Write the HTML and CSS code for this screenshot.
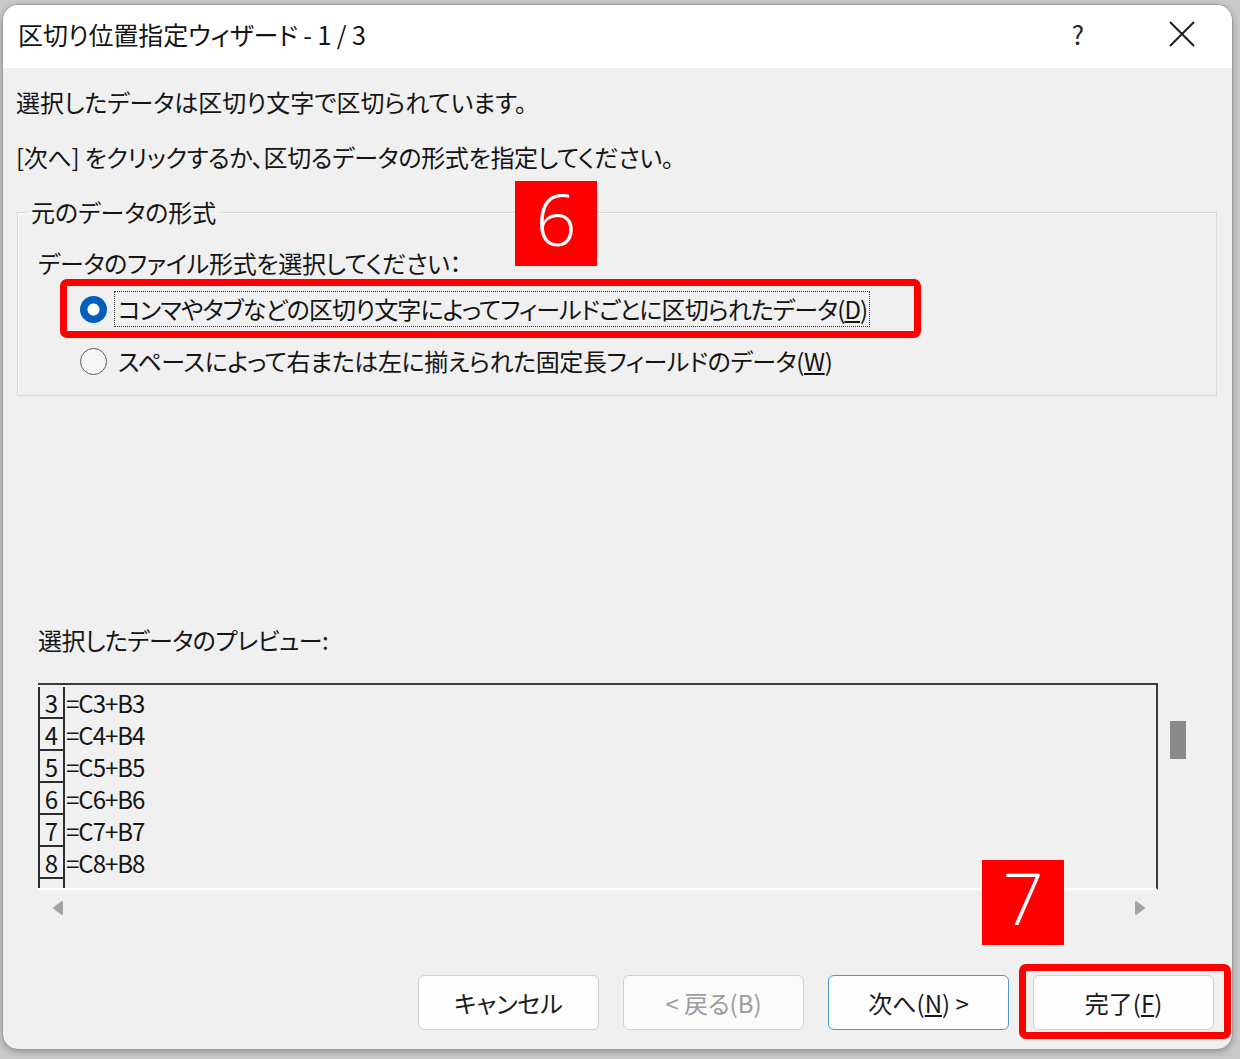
FILE: index.html
```html
<!DOCTYPE html>
<html lang="ja">
<head>
<meta charset="utf-8">
<title>区切り位置指定ウィザード</title>
<link rel="stylesheet" href="styles.css">
</head>
<body>
<div class="dialog">
  <div class="titlebar">
    <span class="title">区切り位置指定ウィザード - 1 / 3</span>
    <span class="help">?</span>
    <span class="close">
      <svg width="26" height="26" viewBox="0 0 26 26"><path d="M1 1 L25 25 M25 1 L1 25" stroke="#1c1c1c" stroke-width="2" fill="none"/></svg>
    </span>
  </div>
  <div class="content">
    <p class="intro">選択したデータは区切り文字で区切られています。</p>
    <p class="intro intro2">[次へ] をクリックするか、区切るデータの形式を指定してください。</p>
    <fieldset class="group">
      <legend>元のデータの形式</legend>
      <div class="prompt">データのファイル形式を選択してください：</div>
      <div class="radio checked"><span class="dot"></span><span class="rtext focus">コンマやタブなどの区切り文字によってフィールドごとに区切られたデータ(<u>D</u>)</span></div>
      <div class="radio second"><span class="dot"></span><span class="rtext">スペースによって右または左に揃えられた固定長フィールドのデータ(<u>W</u>)</span></div>
    </fieldset>
    <div class="preview-label">選択したデータのプレビュー:</div>
    <div class="preview-wrap">
      <div class="preview">
        <div class="row"><span class="num">3</span><span class="cell">=C3+B3</span></div>
        <div class="row"><span class="num">4</span><span class="cell">=C4+B4</span></div>
        <div class="row"><span class="num">5</span><span class="cell">=C5+B5</span></div>
        <div class="row"><span class="num">6</span><span class="cell">=C6+B6</span></div>
        <div class="row"><span class="num">7</span><span class="cell">=C7+B7</span></div>
        <div class="row"><span class="num">8</span><span class="cell">=C8+B8</span></div>
        <div class="row"><span class="num"></span><span class="cell"></span></div>
      </div>
      <div class="vscroll"><div class="thumb"></div></div>
    </div>
    <div class="hscroll">
      <svg width="14" height="16" viewBox="0 0 14 16"><path d="M11 2 L3 8 L11 14 Z" fill="#a3a3a3" stroke="#a3a3a3" stroke-width="2" stroke-linejoin="round"/></svg>
      <svg width="14" height="16" viewBox="0 0 14 16"><path d="M3 2 L11 8 L3 14 Z" fill="#a3a3a3" stroke="#a3a3a3" stroke-width="2" stroke-linejoin="round"/></svg>
    </div>
    <div class="buttons">
      <div class="btn">キャンセル</div>
      <div class="btn disabled">&lt; 戻る(B)</div>
      <div class="btn default">次へ(<u>N</u>) &gt;</div>
      <div class="btn">完了(<u>F</u>)</div>
    </div>
  </div>
  <div class="badge badge6">6</div>
  <div class="badge badge7">7</div>
  <div class="highlight hl-radio"></div>
  <div class="highlight hl-finish"></div>
</div>
</body>
</html>
```
FILE: styles.css
```css
html, body {
  margin: 0;
  padding: 0;
}
body {
  background: #c9c9c9;
  width: 1240px;
  height: 1059px;
  overflow: hidden;
  font-family: "Noto Sans CJK JP", "Noto Sans", sans-serif;
  font-feature-settings: "palt";
  color: #141414;
}
.dialog {
  position: relative;
  margin: 4px 0 0 2px;
  width: 1231px;
  box-sizing: border-box;
  border: 1px solid #9a9a9a;
  border-radius: 16px;
  overflow: hidden;
  background: #f0f0f0;
  box-shadow: 0 2px 6px rgba(0,0,0,0.25);
}
.titlebar {
  height: 63px;
  box-sizing: border-box;
  padding-bottom: 6px;
  background: #ffffff;
  display: flex;
  align-items: center;
}
.title {
  font-size: 25px;
  padding-left: 15px;
  letter-spacing: -0.1px;
  flex: 1;
}
.help {
  width: 108px;
  text-align: center;
  font-size: 26px;
  color: #222;
}
.close {
  width: 100px;
  display: flex;
  justify-content: center;
  align-items: center;
}
.content {
  padding: 17px 0 19px 0;
}
.intro {
  margin: 0 0 21px 13px;
  font-size: 24px;
  line-height: 34px;
}
.intro2 {
  letter-spacing: -0.3px;
}
.group {
  margin: 0 0 0 14px;
  width: 1200px;
  box-sizing: border-box;
  border: 1px solid #d9d9d9;
  box-shadow: inset 1px 1px 0 #fbfbfb;
  padding: 17px 0 16px 20px;
}
.group legend {
  font-size: 24px;
  line-height: 34px;
  padding: 0 3px;
  margin-left: -10px;
}
.prompt {
  font-size: 24px;
  line-height: 34px;
  letter-spacing: -0.3px;
}
.radio {
  display: flex;
  align-items: center;
  height: 36px;
  margin-left: 42px;
  font-size: 24px;
  letter-spacing: -0.9px;
}
.radio.second {
  letter-spacing: -0.4px;
}
.radio.checked {
  margin-top: 11px;
  margin-bottom: 16px;
}
.dot {
  width: 27px;
  height: 27px;
  box-sizing: border-box;
  border-radius: 50%;
  border: 1.5px solid #5a5a5a;
  background: #f7f7f7;
  margin-right: 7px;
  flex: none;
}
.checked .dot {
  border: none;
  background: radial-gradient(circle, #ffffff 0 5.5px, #005fb8 6.5px);
}
.rtext {
  line-height: 34px;
  padding: 0 2px 0 3px;
  border: 1px solid transparent;
}
.rtext.focus {
  border: 1px dotted #333;
}
.preview-label {
  margin: 227px 0 0 35px;
  font-size: 24px;
  line-height: 34px;
  letter-spacing: -0.5px;
}
.preview-wrap {
  display: flex;
  margin: 26px 0 0 35px;
}
.preview {
  width: 1120px;
  height: 207px;
  box-sizing: border-box;
  border-top: 2px solid #3c3c3c;
  border-right: 2px solid #3c3c3c;
  border-bottom: 2px solid #ffffff;
  overflow: hidden;
  padding-top: 2px;
}
.row {
  display: flex;
  height: 32px;
  font-size: 24px;
  line-height: 32px;
  letter-spacing: -1px;
}
.num {
  width: 27px;
  box-sizing: border-box;
  border-left: 2px solid #2e2e2e;
  border-right: 2px solid #2e2e2e;
  border-bottom: 2px solid #2e2e2e;
  text-align: center;
  letter-spacing: 0;
}
.cell {
  padding-left: 1px;
}
.vscroll {
  margin-left: 12px;
  padding-top: 38px;
}
.thumb {
  width: 16px;
  height: 38px;
  background: #898989;
}
.hscroll {
  display: flex;
  justify-content: space-between;
  align-items: center;
  height: 36px;
  margin-left: 48px;
  width: 1096px;
}
.buttons {
  display: flex;
  justify-content: flex-end;
  gap: 24px;
  margin-top: 49px;
  padding-right: 18px;
}
.btn {
  width: 181px;
  height: 55px;
  box-sizing: border-box;
  border: 1px solid #d0d0d0;
  border-radius: 6px;
  background: #fdfdfd;
  display: flex;
  align-items: center;
  justify-content: center;
  font-size: 24px;
  color: #1a1a1a;
}
.btn.disabled {
  color: #9b9b9b;
  background: #fbfbfb;
}
.btn.default {
  border: 1.5px solid #4a94d8;
}
.badge {
  position: absolute;
  width: 82px;
  height: 85px;
  background: #ff0000;
  color: #ffffff;
  font-family: "Open Sans", "Noto Sans", sans-serif;
  font-weight: 300;
  font-size: 72px;
  line-height: 75px;
  text-align: center;
}
.badge6 {
  left: 512px;
  top: 176px;
}
.badge7 {
  left: 979px;
  top: 855px;
}
.highlight {
  position: absolute;
  box-sizing: border-box;
  border: 7px solid #ff0000;
  border-radius: 7px;
}
.hl-radio {
  left: 57px;
  top: 274px;
  width: 861px;
  height: 59px;
}
.hl-finish {
  left: 1016px;
  top: 959px;
  width: 212px;
  height: 75px;
}
```
